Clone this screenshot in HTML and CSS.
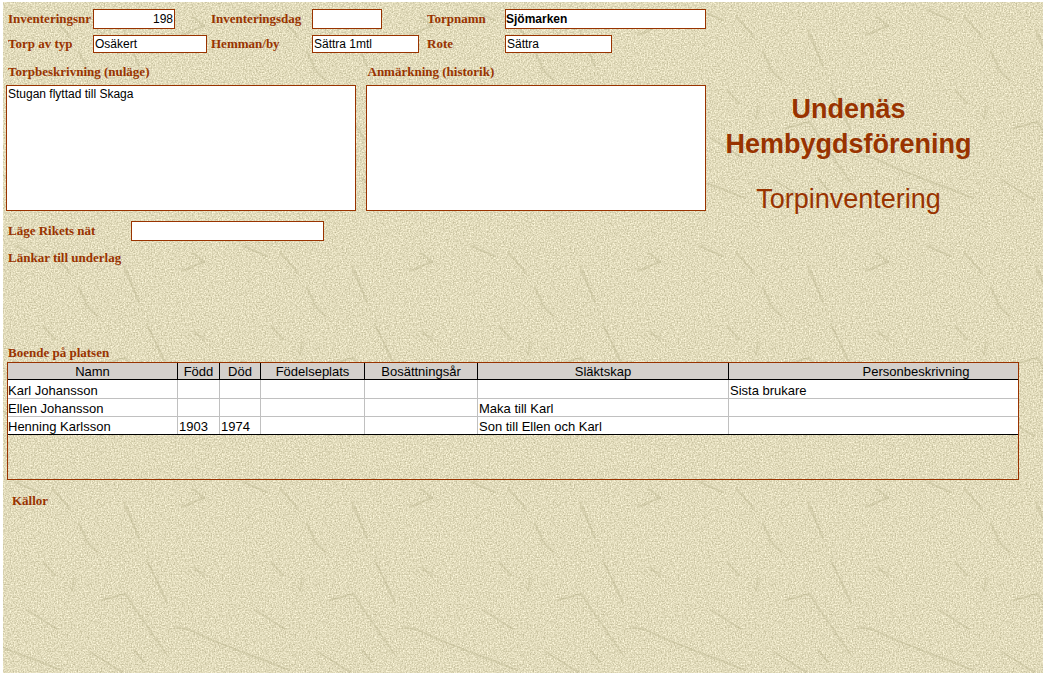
FILE: index.html
```html
<!DOCTYPE html>
<html lang="sv">
<head>
  <meta charset="UTF-8" />
  <meta name="viewport" content="width=device-width, initial-scale=1.0"/>
  <title>Torpinventering - Undenäs Hembygdsförening</title>
  <link rel="stylesheet" href="styles.css">
</head>
<body>
  <div class="page">
    <div class="top">
      <form class="inventering">
        <div class="fields">
          <label for="nr">Inventeringsnr</label>
          <input class="tall nr" type="text" id="nr" value="198" />
          <label for="dag">Inventeringsdag</label>
          <input class="tall dag" type="text" id="dag" />
          <label for="torpnamn">Torpnamn</label>
          <input class="tall torpnamn" type="text" id="torpnamn" value="Sjömarken" />

          <label for="typ">Torp av typ</label>
          <input class="typ" type="text" id="typ" value="Osäkert" />
          <label for="hemman">Hemman/by</label>
          <input type="text" id="hemman" value="Sättra 1mtl" />
          <label for="rote">Rote</label>
          <input type="text" id="rote" value="Sättra" />
        </div>

        <div class="notes">
          <div class="note">
            <label for="beskrivning">Torpbeskrivning (nuläge)</label>
            <textarea id="beskrivning">Stugan flyttad till Skaga</textarea>
          </div>
          <div class="note">
            <label for="historik">Anmärkning (historik)</label>
            <textarea id="historik"></textarea>
          </div>
        </div>

        <div class="position">
          <label for="lage">Läge Rikets nät</label>
          <input class="tall" type="text" id="lage" />
        </div>
      </form>

      <header class="title">
        <h1>Undenäs Hembygdsförening</h1>
        <p>Torpinventering</p>
      </header>
    </div>

    <section class="links">
      <h2>Länkar till underlag</h2>
    </section>

    <section class="residents">
      <h2>Boende på platsen</h2>
      <div class="table-box">
        <table>
          <thead>
            <tr>
              <th class="c-namn">Namn</th>
              <th class="c-fodd">Född</th>
              <th class="c-dod">Död</th>
              <th class="c-plats">Födelseplats</th>
              <th class="c-ar">Bosättningsår</th>
              <th class="c-slakt">Släktskap</th>
              <th>Personbeskrivning</th>
            </tr>
          </thead>
          <tbody>
            <tr><td>Karl Johansson</td><td></td><td></td><td></td><td></td><td></td><td>Sista brukare</td></tr>
            <tr><td>Ellen Johansson</td><td></td><td></td><td></td><td></td><td>Maka till Karl</td><td></td></tr>
            <tr><td>Henning Karlsson</td><td>1903</td><td>1974</td><td></td><td></td><td>Son till Ellen och Karl</td><td></td></tr>
          </tbody>
        </table>
      </div>
    </section>

    <section class="sources">
      <h2>Källor</h2>
    </section>
  </div>
</body>
</html>
```

FILE: styles.css
```css
* {
  box-sizing: border-box;
}
body {
  margin: 0;
  background-color: white;
  color: black;
  font-family: "Liberation Sans", Arial, sans-serif;
  font-size: 12px;
}
/* parchment tile with scratches */
.page {
  margin: 2px 3px 0 3px;
  min-height: calc(100vh - 2px);
  padding: 7px 24px 0 3px;
  background-color: #e0d9b4;
  background-image: url("data:image/svg+xml,%3Csvg xmlns='http://www.w3.org/2000/svg' width='228' height='236'%3E%3Cfilter id='g' x='0' y='0' width='100%25' height='100%25' color-interpolation-filters='sRGB'%3E%3CfeTurbulence type='fractalNoise' baseFrequency='.7' numOctaves='2' seed='7' stitchTiles='stitch'/%3E%3CfeColorMatrix values='0 0 0 .36 .705 0 0 0 .36 .68 0 0 0 .4 .535 0 0 0 0 1'/%3E%3C/filter%3E%3Crect width='228' height='236' filter='url(%23g)'/%3E%3Cg fill='none' stroke='%23b5b087' stroke-opacity='.36' stroke-width='2' stroke-linecap='round'%3E%3Cpath d='M49 14l17 20M76 49l8 19 10 10M121 28l15 36M144 86l20 43M179 33l22-9-11-9M41 89l11 12M71 104l-2 12M99 126l23-6 42 61M24 136l30 19M171 153l16 3 22 10 30 12M-19 166l30 12 47 18M87 178l32 20M192 94l9 8M131 176l10 12M12 8l24 10'/%3E%3C/g%3E%3C/svg%3E");
}
label, h2 {
  margin: 0;
  color: #993300;
  font-family: "Liberation Serif", "Times New Roman", serif;
  font-size: 13px;
  font-weight: bold;
  line-height: 16px;
  white-space: nowrap;
}
input, textarea {
  display: block;
  margin: 0;
  padding: 0 1px;
  border: 1px solid #993300;
  border-radius: 0;
  outline: none;
  background-color: white;
  color: black;
  font-family: inherit;
  font-size: 12px;
}
input {
  width: 107px;
  height: 18px;
}
.tall {
  height: 20px;
}

.top {
  display: flex;
}
.inventering {
  flex: 0 0 699px;
}
.fields {
  display: grid;
  grid-template-columns: 85px 118px 101px 115px 78px 1fr;
  row-gap: 6px;
  align-items: center;
  padding-left: 2px;
}
.fields label {
  overflow: hidden;
}
.nr {
  width: 82px;
  text-align: right;
}
.dag {
  width: 70px;
}
.torpnamn {
  width: 201px;
  padding: 0;
  font-weight: bold;
}
.typ {
  width: 114px;
}

.notes {
  display: flex;
  gap: 10px;
  margin-top: 11px;
}
.note {
  flex: 1 1 340px;
}
.note:first-child {
  flex-basis: 349px;
}
.note label {
  display: block;
  padding-left: 2px;
}
.note textarea {
  width: 100%;
  height: 126px;
  margin-top: 5px;
  line-height: 16px;
  resize: none;
}
.position {
  display: grid;
  grid-template-columns: 123px 193px;
  align-items: center;
  margin-top: 10px;
  padding-left: 2px;
}
.position input {
  width: 100%;
}

.title {
  flex: 1;
  padding: 83px 28px 0 0;
  color: #993300;
  text-align: center;
}
.title h1 {
  margin: 0;
  font-size: 27px;
  line-height: 35px;
}
.title p {
  margin: 20px 0 0 0;
  font-size: 27px;
  line-height: 34px;
}

.links {
  min-height: 95px;
  margin-top: 9px;
  padding-left: 2px;
}
.residents h2 {
  padding-left: 2px;
}
.table-box {
  height: 118px;
  margin: 1px 0 0 1px;
  border: 1px solid #993300;
  overflow: hidden;
}
/* the last column runs on past the edge of the box */
table {
  width: calc(100% + 86px);
  table-layout: fixed;
  border-collapse: separate;
  border-spacing: 0;
  border-bottom: 1px solid black;
  font-size: 13px;
}
th, td {
  height: 18px;
  padding: 2px 1px 0 1px;
  line-height: 15px;
  white-space: nowrap;
}
th {
  height: 17px;
  line-height: 14px;
  background-color: #d4d0cc;
  border-right: 1px solid black;
  border-bottom: 1px solid black;
  font-weight: normal;
}
td {
  background-color: white;
  border-right: 1px solid #c0c0c0;
  border-bottom: 1px solid #c0c0c0;
  text-align: left;
}
tbody tr:first-child td {
  height: 19px;
  padding-top: 3px;
}
td:first-child {
  padding-left: 0;
}
tbody tr:last-child td {
  height: 17px;
  border-bottom: none;
}
.c-namn {
  width: 170px;
}
.c-fodd {
  width: 42px;
}
.c-dod {
  width: 41px;
}
.c-plats {
  width: 104px;
}
.c-ar {
  width: 113px;
}
.c-slakt {
  width: 251px;
}

.sources {
  margin-top: 13px;
  padding-left: 6px;
}
```
